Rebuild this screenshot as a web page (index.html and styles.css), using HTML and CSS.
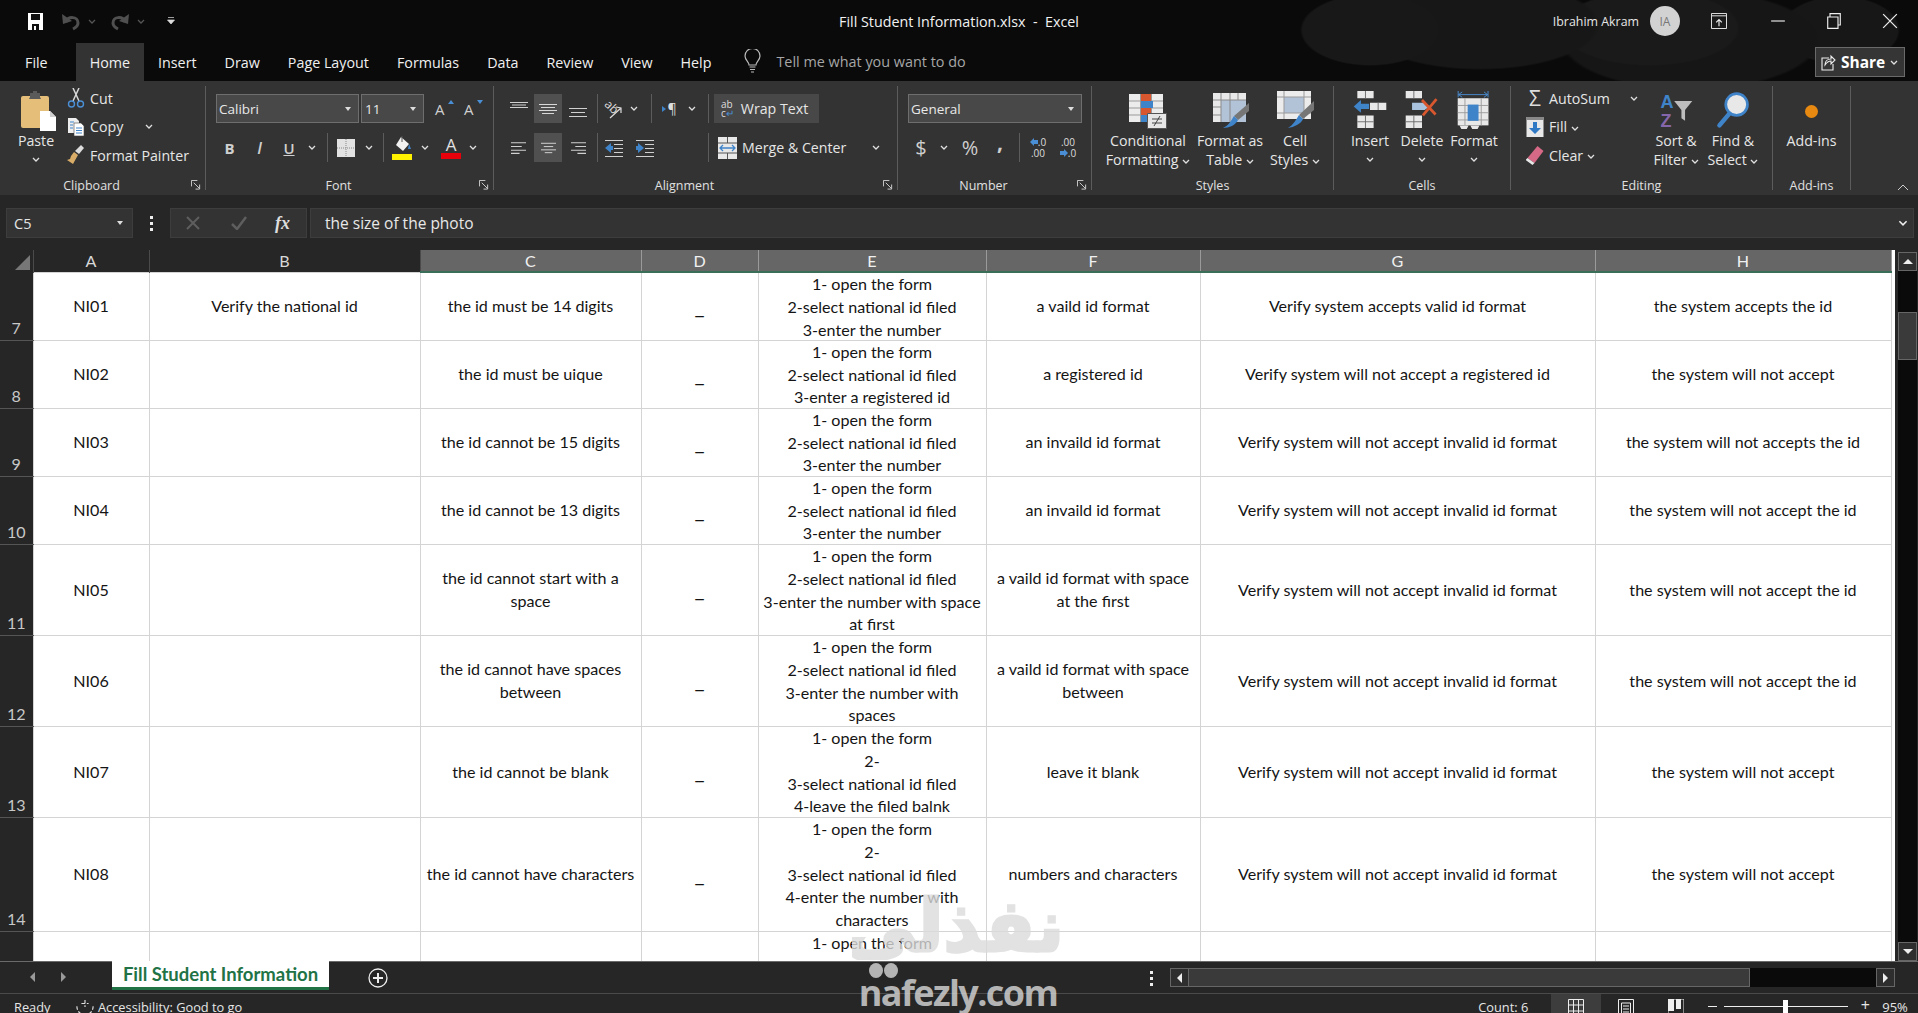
FILE: index.html
```html
<!DOCTYPE html>
<html lang="en">
<head>
    <meta charset="UTF-8">
    <title>Fill Student Information.xlsx - Excel</title>
    <link rel="stylesheet" href="styles.css">
</head>
<body>
    <svg class="defs" aria-hidden="true">
        <symbol id="chev" viewBox="0 0 8 5"><path d="M1 1l3 3 3-3" fill="none" stroke="currentColor" stroke-width="1.300"/></symbol>
        <symbol id="launch" viewBox="0 0 11 11"><path d="M.5 7V.5H7M3 3l6 6M9.500 5v5H5" fill="none" stroke="#d8d8d8"/></symbol>
    </svg>

    <div class="top">
        <div class="titlebar">
            <div class="qat">
                <svg class="save" viewBox="0 0 17 19"><path d="M1 1h15v17H1z" fill="#fff"/><path d="M4 2h9v6H4z" fill="#111"/><path d="M5 12h7v6H5z" fill="#111"/><path d="M7 14h2v4H7z" fill="#fff"/></svg>
                <svg class="undo" viewBox="0 0 20 20"><path d="M5 11c2-6 12-6 12 1 0 3-3 5-5 6" fill="none" stroke="#4f4f4f" stroke-width="3"/><path d="M1 3l1 10 9-3z" fill="#4f4f4f"/></svg>
                <svg class="qat-chev dim"><use href="#chev"/></svg>
                <svg class="undo" viewBox="0 0 20 20"><path d="M15 11c-2-6-12-6-12 1 0 3 3 5 5 6" fill="none" stroke="#4f4f4f" stroke-width="3"/><path d="M19 3l-1 10-9-3z" fill="#4f4f4f"/></svg>
                <svg class="qat-chev dim"><use href="#chev"/></svg>
                <svg class="custom" viewBox="0 0 8 9"><path d="M1 .5h6M.5 3h7L4 7z" fill="#ddd" stroke="#ddd" stroke-width=".7"/></svg>
            </div>
            <div class="doc-title">Fill Student Information.xlsx &nbsp;-&nbsp; Excel</div>
            <div class="account">
                <span class="user-name">Ibrahim Akram</span>
                <span class="avatar">IA</span>
                <span class="win-btn win-first"><svg class="win-icon" viewBox="0 0 17 17"><path d="M.5.500h16v16H.5zM1 3h15" fill="none" stroke="#eee"/><path d="M8.500 14V7M5.500 10l3-3 3 3" fill="none" stroke="#eee" stroke-width="1.200"/></svg></span>
                <span class="win-btn"><svg class="win-icon" viewBox="0 0 14 14"><path d="M1 7h12" stroke="#eee"/></svg></span>
                <span class="win-btn"><svg class="win-icon" viewBox="0 0 14 14"><path d="M1.500 3.500h9v10h-9zM3.500 3.500v-3h9v10h-2" fill="none" stroke="#eee"/></svg></span>
                <span class="win-btn"><svg class="win-icon" viewBox="0 0 14 14"><path d="M1 1l12 12M13 1L1 13" stroke="#eee" stroke-width="1.100"/></svg></span>
            </div>
        </div>
        <div class="tabs">
            <span class="tab tab-file">File</span>
            <span class="tab tab-active">Home</span>
            <span class="tab">Insert</span>
            <span class="tab">Draw</span>
            <span class="tab">Page Layout</span>
            <span class="tab">Formulas</span>
            <span class="tab">Data</span>
            <span class="tab">Review</span>
            <span class="tab">View</span>
            <span class="tab">Help</span>
            <svg class="bulb" viewBox="0 0 17 24"><path d="M5 16c0-3-4-5-4-9a7.500 7.500 0 0 1 15 0c0 4-4 6-4 9z" fill="none" stroke="#bbb" stroke-width="1.200"/><path d="M5.500 18h6M6 20.500h5M7 23h3" stroke="#bbb" stroke-width="1.200"/></svg>
            <span class="tell-me">Tell me what you want to do</span>
            <div class="share">
                <svg class="share-icon" viewBox="0 0 15 17"><path d="M8 4H1v12h11v-6" fill="none" stroke="#eee" stroke-width="1.100"/><path d="M4 11c0-4 3-6 6-6V2l4 4-4 4V7c-2 0-4 1-6 4z" fill="#333" stroke="#eee" stroke-width="1.100"/></svg>
                <span>Share</span>
                <svg class="chev"><use href="#chev"/></svg>
            </div>
        </div>
    </div>

    <div class="ribbon">
        <section class="group g-clipboard">
            <div class="group-body">
                <div class="large paste">
                    <div class="large-icon">
                        <svg class="paste-icon" viewBox="0 0 36 40"><rect x="1" y="5" width="28" height="32" rx="2" fill="#e5bf79"/><path d="M10 6V2h3V0h4v2h3v4l1 2H9z" fill="#5a5a5a"/><path d="M20 20h10l6 6v14H20z" fill="#fff"/><path d="M30 20v6h6z" fill="#cfcfcf"/></svg>
                    </div>
                    <span>Paste</span>
                    <svg class="chev"><use href="#chev"/></svg>
                </div>
                <div class="small-col clip-col">
                    <div class="small-row">
                        <svg class="small-icon" viewBox="0 0 18 20"><path d="M6 0l6 13M12 0L6 13" stroke="#d8d8d8" stroke-width="1.500"/><circle cx="4.500" cy="16" r="3" fill="none" stroke="#4a8fd6" stroke-width="1.400"/><circle cx="13.500" cy="16" r="3" fill="none" stroke="#4a8fd6" stroke-width="1.400"/></svg>
                        <span>Cut</span>
                    </div>
                    <div class="small-row">
                        <svg class="small-icon" viewBox="0 0 18 20"><path d="M1 1h8l3 3v12H1z" fill="#eee"/><path d="M7 6h7l3 3v10H7z" fill="#fff" stroke="#444" stroke-width=".6"/><path d="M3 5h4M3 8h3M3 11h3M9 11h6M9 13.500h6M9 16h6" stroke="#3f83c9" stroke-width="1.100"/></svg>
                        <span>Copy</span>
                        <svg class="chev copy-chev"><use href="#chev"/></svg>
                    </div>
                    <div class="small-row">
                        <svg class="small-icon" viewBox="0 0 18 20"><path d="M14 0l3 3-5 6-4-3z" fill="#ddd"/><path d="M7 7l4 3-5 9-6-4 3-1 1-3z" fill="#d9ad68"/></svg>
                        <span>Format Painter</span>
                    </div>
                </div>
            </div>
            <div class="group-label has-launcher">Clipboard</div>
            <svg class="launcher"><use href="#launch"/></svg>
        </section>

        <section class="group g-font">
            <div class="group-body stack">
                <div class="tool-row">
                    <div class="combo font-name"><span>Calibri</span><i class="caret"></i></div>
                    <div class="combo font-size"><span>11</span><i class="caret"></i></div>
                    <span class="glyph-a grow">A</span>
                    <span class="glyph-a shrink">A</span>
                </div>
                <div class="tool-row">
                    <span class="slot w27 glyph bold">B</span>
                    <span class="slot w33 glyph ital">I</span>
                    <span class="slot w26 glyph under">U</span>
                    <span class="slot w20"><svg class="chev"><use href="#chev"/></svg></span>
                    <span class="slot w10"><i class="vsep"></i></span>
                    <span class="slot w27"><svg class="icon18" viewBox="0 0 18 18"><path d="M0 0h18v18H0z" fill="#e2e2e2"/><path d="M9 0v18M0 9h18" stroke="#888" stroke-dasharray="1 1"/></svg></span>
                    <span class="slot w19"><svg class="chev"><use href="#chev"/></svg></span>
                    <span class="slot w10"><i class="vsep"></i></span>
                    <span class="slot w28"><svg class="icon20" viewBox="0 0 20 24"><path d="M9 1l8 7-6 7-7-6z" fill="#f2f2f2"/><path d="M10 0v6" stroke="#555"/><path d="M17 8l2 5h-3z" fill="#3f83c9"/><path d="M0 18h20v6H0z" fill="#fff200"/></svg></span>
                    <span class="slot w18"><svg class="chev"><use href="#chev"/></svg></span>
                    <span class="slot w34 color-a"><b>A</b><i></i></span>
                    <span class="slot w10"><svg class="chev"><use href="#chev"/></svg></span>
                </div>
            </div>
            <div class="group-label has-launcher">Font</div>
            <svg class="launcher"><use href="#launch"/></svg>
        </section>

        <section class="group g-align">
            <div class="group-body align-body">
                <div class="stack">
                    <div class="tool-row">
                        <span class="slot w31"><svg class="icon18" viewBox="0 0 18 18"><path d="M0 2.500h18M2 5h14M0 7.500h18" stroke="#d0d0d0" fill="none"/></svg></span>
                        <span class="slot w28 on"><svg class="icon18" viewBox="0 0 18 18"><path d="M0 4.500h18M2 7.500h14M0 10.500h18M3 13.500h12" stroke="#d8d8d8" fill="none"/></svg></span>
                        <span class="slot w32"><svg class="icon18" viewBox="0 0 18 18"><path d="M0 8.500h18M2 12.500h14M0 16.500h18" stroke="#d0d0d0" fill="none"/></svg></span>
                        <span class="slot w6"><i class="vsep"></i></span>
                        <span class="slot w28"><svg class="icon20" viewBox="0 0 20 24"><text x="1" y="15" class="orient" transform="rotate(45 9 10)">ab</text><path d="M6 21l11-10M12 10l5 1 0 5" fill="none" stroke="#ddd" stroke-width="1.200"/></svg></span>
                        <span class="slot w12"><svg class="chev"><use href="#chev"/></svg></span>
                        <span class="slot w22"><i class="vsep"></i></span>
                        <span class="slot w15 pilcrow"><i></i>¶</span>
                        <span class="slot w30"><svg class="chev"><use href="#chev"/></svg></span>
                        <span class="slot w2"><i class="vsep"></i></span>
                    </div>
                    <div class="tool-row">
                        <span class="slot w31"><svg class="icon14" viewBox="0 0 14 12"><path d="M0 1.500h14M0 5h10M0 8.500h14M0 11.500h8" stroke="#d0d0d0"/></svg></span>
                        <span class="slot w28 on"><svg class="icon14" viewBox="0 0 16 12"><path d="M0 1.500h16M3 5h10M0 8.500h16M4 11.500h8" stroke="#d8d8d8"/></svg></span>
                        <span class="slot w32"><svg class="icon14" viewBox="0 0 14 12"><path d="M0 1.500h14M4 5h10M0 8.500h14M6 11.500h8" stroke="#d0d0d0"/></svg></span>
                        <span class="slot w6"><i class="vsep"></i></span>
                        <span class="slot w28"><svg class="icon18" viewBox="0 0 18 18"><path d="M0 1.500h18M9 5.500h9M9 9.500h9M9 13.500h9M0 17.500h18" stroke="#d0d0d0"/><path d="M0 9l6-5v3h2v4H6v3z" fill="#3f83c9"/></svg></span>
                        <span class="slot w34"><svg class="icon18" viewBox="0 0 18 18"><path d="M0 1.500h18M9 5.500h9M9 9.500h9M9 13.500h9M0 17.500h18" stroke="#d0d0d0"/><path d="M8 9L2 4v3H0v4h2v3z" fill="#3f83c9"/></svg></span>
                        <span class="slot w45"></span>
                        <span class="slot w2"><i class="vsep"></i></span>
                    </div>
                </div>
                <div class="stack wrap-col">
                    <div class="wrap-btn">
                        <span class="wrap-glyph">ab<br>c<em>↵</em></span>
                        <span>Wrap Text</span>
                    </div>
                    <div class="merge-btn">
                        <svg class="merge-icon" viewBox="0 0 19 22"><path d="M0 0h19v22H0z" fill="#e8e8e8"/><path d="M0 6h19M0 16h19M9.500 0v6M9.500 16v6" stroke="#555"/><path d="M2 11h15M5 8l-3 3 3 3M14 8l3 3-3 3" fill="none" stroke="#3f83c9" stroke-width="1.300"/></svg>
                        <span class="merge-text">Merge &amp; Center</span>
                        <svg class="chev"><use href="#chev"/></svg>
                    </div>
                </div>
            </div>
            <div class="group-label has-launcher">Alignment</div>
            <svg class="launcher"><use href="#launch"/></svg>
        </section>

        <section class="group g-number">
            <div class="group-body stack">
                <div class="tool-row">
                    <div class="combo number-format"><span>General</span><i class="caret"></i></div>
                </div>
                <div class="tool-row">
                    <span class="slot w26 glyph big">$</span>
                    <span class="slot w20"><svg class="chev"><use href="#chev"/></svg></span>
                    <span class="slot w32 glyph big">%</span>
                    <span class="slot w28 glyph comma">,</span>
                    <span class="slot w10"><i class="vsep"></i></span>
                    <span class="slot w28 decimals"><svg class="dec-arrow" viewBox="0 0 8 8"><path d="M0 4l4-4v2h4v4H4v2z" fill="#4a8fd6"/></svg>.0<br>.00</span>
                    <span class="slot w32 decimals">.00<br><svg class="dec-arrow" viewBox="0 0 8 8"><path d="M8 4L4 0v2H0v4h4v2z" fill="#4a8fd6"/></svg>.0</span>
                </div>
            </div>
            <div class="group-label has-launcher">Number</div>
            <svg class="launcher"><use href="#launch"/></svg>
        </section>

        <section class="group g-styles">
            <div class="group-body">
                <div class="large w90">
                    <div class="large-icon">
                        <svg class="style-icon" viewBox="0 0 38 38"><path d="M0 3h34v28H0z" fill="#ececec"/><path d="M11.500 3v28M22.500 3v28M0 10h34M0 17h34M0 24h34" stroke="#999"/><path d="M12 3h10v7H12zM12 17h10v7H12z" fill="#d9572e"/><path d="M12 10h12v7H12zM12 24h10v7H12z" fill="#3f83c9"/><path d="M18.500 22.500h19v15h-19z" fill="#e6e6e6" stroke="#555"/><path d="M23 28h10M23 32h10M31 25l-6 10" stroke="#444"/></svg>
                    </div>
                    <span>Conditional</span>
                    <span>Formatting <svg class="chev"><use href="#chev"/></svg></span>
                </div>
                <div class="large w74">
                    <div class="large-icon">
                        <svg class="style-icon" viewBox="0 0 38 38"><path d="M2 2h33v29H2z" fill="#e8e8e8"/><path d="M10 9h25v22H10z" fill="#b2c3d8"/><path d="M10 2v29M19 2v29M27 2v7M2 9h33M2 16h8M2 24h8" stroke="#8a8a8a"/><path d="M38 12v8l-11 9-4-4z" fill="#767676"/><path d="M23 25l4 4c-2 5-9 8-15 8 5-2 8-7 11-12z" fill="#3f83c9"/></svg>
                    </div>
                    <span>Format as</span>
                    <span>Table <svg class="chev"><use href="#chev"/></svg></span>
                </div>
                <div class="large w56">
                    <div class="large-icon">
                        <svg class="style-icon" viewBox="0 0 38 38"><path d="M1 0h34v28H1z" fill="#ececec"/><path d="M8 6h20v16H8z" fill="#b2c3d8"/><path d="M8 0v28M28 0v28M1 6h34M1 22h34" stroke="#9a9a9a"/><path d="M38 10v9l-11 9-4-4z" fill="#767676"/><path d="M23 24l4 4c-2 5-9 8-15 9 5-3 8-8 11-13z" fill="#3f83c9"/></svg>
                    </div>
                    <span>Cell</span>
                    <span>Styles <svg class="chev"><use href="#chev"/></svg></span>
                </div>
            </div>
            <div class="group-label">Styles</div>
        </section>

        <section class="group g-cells">
            <div class="group-body">
                <div class="large w52">
                    <div class="large-icon">
                        <svg class="style-icon" viewBox="0 0 36 42"><path d="M4 0h18v8H4zM18 13h18v8H18zM4 27h18v14H4z" fill="#e8e8e8"/><path d="M13 0v8M27 13v8M13 27v14M4 34h18" stroke="#666"/><path d="M0 17l8-7v4h9v6H8v4z" fill="#3f83c9"/></svg>
                    </div>
                    <span>Insert</span>
                    <svg class="chev"><use href="#chev"/></svg>
                </div>
                <div class="large w52">
                    <div class="large-icon">
                        <svg class="style-icon" viewBox="0 0 36 42"><path d="M0 0h18v8H0zM0 27h18v14H0z" fill="#e8e8e8"/><path d="M9 0v8M9 27v14M0 34h18" stroke="#666"/><path d="M7 13h14l5 4-5 4H7z" fill="#a9c3de"/><path d="M18 10l15 16M34 9L19 27" stroke="#d9572e" stroke-width="3"/></svg>
                    </div>
                    <span>Delete</span>
                    <svg class="chev"><use href="#chev"/></svg>
                </div>
                <div class="large w52">
                    <div class="large-icon">
                        <svg class="style-icon" viewBox="0 0 36 42"><path d="M0 8h34v30H0z" fill="#e8e8e8"/><path d="M8 8v30M26 8v30M0 16h34M0 24h34M0 32h34" stroke="#999"/><path d="M11 15h12v18H11z" fill="#3f83c9"/><path d="M1 4h32M5 1L1 4l4 3M29 1l4 3-4 3M.500 0v7M33.500 0v7" fill="none" stroke="#4a8fd6"/><path d="M2 38h10l-2 4H4zM14 38h10l-2 4h-6z" fill="#e8e8e8"/></svg>
                    </div>
                    <span>Format</span>
                    <svg class="chev"><use href="#chev"/></svg>
                </div>
            </div>
            <div class="group-label">Cells</div>
        </section>

        <section class="group g-editing">
            <div class="group-body">
                <div class="small-col edit-col">
                    <div class="small-row">
                        <span class="sigma">Σ</span>
                        <span>AutoSum</span>
                        <svg class="chev sum-chev"><use href="#chev"/></svg>
                    </div>
                    <div class="small-row">
                        <svg class="small-icon" viewBox="0 0 17 20"><path d="M0 0h17v20H0z" fill="#e8e8e8"/><path d="M0 0h17v3H0z" fill="#888"/><path d="M8.500 17l-6-6h4V5h4v6h4z" fill="#2f78c4"/></svg>
                        <span>Fill <svg class="chev"><use href="#chev"/></svg></span>
                    </div>
                    <div class="small-row">
                        <svg class="small-icon" viewBox="0 0 17 20"><path d="M11 1l6 5-9 12-7-5z" fill="#d66a86"/><path d="M1 13l7 5-2 2-7-5z" fill="#e8e8e8"/></svg>
                        <span>Clear <svg class="chev"><use href="#chev"/></svg></span>
                    </div>
                </div>
                <div class="large w52">
                    <div class="large-icon">
                        <svg class="style-icon" viewBox="0 0 36 42"><text x="1" y="19" class="az a">A</text><text x="1" y="40" class="az z">Z</text><path d="M16 11h20l-8 10v12l-4-3V21z" fill="#bdbdbd"/></svg>
                    </div>
                    <span>Sort &amp;</span>
                    <span>Filter <svg class="chev"><use href="#chev"/></svg></span>
                </div>
                <div class="large w62">
                    <div class="large-icon">
                        <svg class="style-icon" viewBox="0 0 36 42"><circle cx="22" cy="15" r="12" fill="#e8e8e8" stroke="#3f83c9" stroke-width="3"/><path d="M14 25L3 38" stroke="#3f83c9" stroke-width="5" stroke-linecap="round"/></svg>
                    </div>
                    <span>Find &amp;</span>
                    <span>Select <svg class="chev"><use href="#chev"/></svg></span>
                </div>
            </div>
            <div class="group-label">Editing</div>
        </section>

        <section class="group g-addins">
            <div class="group-body">
                <div class="large w78">
                    <div class="large-icon"><i class="addin-dot"></i></div>
                    <span>Add-ins</span>
                </div>
            </div>
            <div class="group-label">Add-ins</div>
        </section>

        <svg class="collapse" viewBox="0 0 12 7"><path d="M1 6l5-5 5 5" fill="none" stroke="#ccc"/></svg>
    </div>

    <div class="formula-bar">
        <div class="name-box"><span>C5</span><i class="caret"></i></div>
        <div class="fb-dots"><i></i><i></i><i></i></div>
        <div class="fb-buttons">
            <svg class="fb-x" viewBox="0 0 14 14"><path d="M1 1l12 12M13 1L1 13" stroke="#5e5e5e" stroke-width="2"/></svg>
            <svg class="fb-check" viewBox="0 0 16 14"><path d="M1 8l5 5L15 1" fill="none" stroke="#5e5e5e" stroke-width="2.500"/></svg>
            <span class="fx">fx</span>
        </div>
        <div class="fb-input">
            <span>the size of the photo</span>
            <svg class="fb-chev"><use href="#chev"/></svg>
        </div>
    </div>

    <div class="sheet-area">
        <div class="sheet">
            <table class="grid">
                <colgroup>
                    <col class="c-row"><col class="c-a"><col class="c-b"><col class="c-c"><col class="c-d"><col class="c-e"><col class="c-f"><col class="c-g"><col class="c-h">
                </colgroup>
                <thead>
                    <tr>
                        <th class="corner"><i></i></th>
                        <th>A</th><th>B</th>
                        <th class="sel">C</th><th class="sel">D</th><th class="sel">E</th><th class="sel">F</th><th class="sel">G</th><th class="sel">H</th>
                    </tr>
                </thead>
                <tbody>
                    <tr class="h3">
                        <th>7</th><td>NI01</td><td>Verify the national id</td><td>the id must be 14 digits</td><td class="dash">_</td>
                        <td><div class="lines">1- open the form<br>2-select national id filed<br>3-enter the number</div></td>
                        <td>a vaild id format</td><td>Verify system accepts valid id format</td><td>the system accepts the id</td>
                    </tr>
                    <tr class="h3">
                        <th>8</th><td>NI02</td><td></td><td>the id must be uique</td><td class="dash">_</td>
                        <td><div class="lines">1- open the form<br>2-select national id filed<br>3-enter a registered id</div></td>
                        <td>a registered id</td><td>Verify system will not accept a registered id</td><td>the system will not accept</td>
                    </tr>
                    <tr class="h3">
                        <th>9</th><td>NI03</td><td></td><td>the id cannot be 15 digits</td><td class="dash">_</td>
                        <td><div class="lines">1- open the form<br>2-select national id filed<br>3-enter the number</div></td>
                        <td>an invaild id format</td><td>Verify system will not accept invalid id format</td><td>the system will not accepts the id</td>
                    </tr>
                    <tr class="h3">
                        <th>10</th><td>NI04</td><td></td><td>the id cannot be 13 digits</td><td class="dash">_</td>
                        <td><div class="lines">1- open the form<br>2-select national id filed<br>3-enter the number</div></td>
                        <td>an invaild id format</td><td>Verify system will not accept invalid id format</td><td>the system will not accept the id</td>
                    </tr>
                    <tr class="h4">
                        <th>11</th><td>NI05</td><td></td><td>the id cannot start with a<br>space</td><td class="dash">_</td>
                        <td><div class="lines">1- open the form<br>2-select national id filed<br>3-enter the number with space<br>at first</div></td>
                        <td>a vaild id format with space<br>at the first</td><td>Verify system will not accept invalid id format</td><td>the system will not accept the id</td>
                    </tr>
                    <tr class="h4">
                        <th>12</th><td>NI06</td><td></td><td>the id cannot have spaces<br>between</td><td class="dash">_</td>
                        <td><div class="lines">1- open the form<br>2-select national id filed<br>3-enter the number with<br>spaces</div></td>
                        <td>a vaild id format with space<br>between</td><td>Verify system will not accept invalid id format</td><td>the system will not accept the id</td>
                    </tr>
                    <tr class="h4">
                        <th>13</th><td>NI07</td><td></td><td>the id cannot be blank</td><td class="dash">_</td>
                        <td><div class="lines">1- open the form<br>2-<br>3-select national id filed<br>4-leave the filed balnk</div></td>
                        <td>leave it blank</td><td>Verify system will not accept invalid id format</td><td>the system will not accept</td>
                    </tr>
                    <tr class="h5">
                        <th>14</th><td>NI08</td><td></td><td>the id cannot have characters</td><td class="dash">_</td>
                        <td><div class="lines">1- open the form<br>2-<br>3-select national id filed<br>4-enter the number with<br>characters</div></td>
                        <td>numbers and characters</td><td>Verify system will not accept invalid id format</td><td>the system will not accept</td>
                    </tr>
                    <tr class="cut">
                        <th></th><td></td><td></td><td></td><td></td>
                        <td>1- open the form</td>
                        <td></td><td></td><td></td>
                    </tr>
                </tbody>
            </table>
        </div>
        <div class="vscroll">
            <div class="sb-btn"><i class="tri-up"></i></div>
            <div class="sb-track"><div class="sb-thumb"></div></div>
            <div class="sb-btn"><i class="tri-down"></i></div>
        </div>
    </div>

    <div class="sheet-tabs">
        <div class="tab-nav"><i class="tri-left"></i><i class="tri-right"></i></div>
        <div class="sheet-tab">Fill Student Information</div>
        <svg class="add-sheet" viewBox="0 0 20 20"><circle cx="10" cy="10" r="9" fill="none" stroke="#eee" stroke-width="1.300"/><path d="M10 5v10M5 10h10" stroke="#eee" stroke-width="2"/></svg>
        <div class="fb-dots tab-dots"><i></i><i></i><i></i></div>
        <div class="hscroll">
            <div class="sb-btn"><i class="tri-left"></i></div>
            <div class="hs-thumb"></div>
            <div class="hs-track"></div>
            <div class="sb-btn"><i class="tri-right"></i></div>
        </div>
    </div>

    <div class="status">
        <span class="ready">Ready</span>
        <svg class="a11y" viewBox="0 0 20 20"><path d="M10 1v8M6 5h8M1 8c0 5 3 9 9 10M19 8c0 5-3 9-9 10" fill="none" stroke="#ddd" stroke-width="1.300" stroke-dasharray="4 2"/></svg>
        <span>Accessibility: Good to go</span>
        <span class="count">Count: 6</span>
        <span class="view on"><svg class="view-icon" viewBox="0 0 16 18"><path d="M.5.500h15v17H.5zM5.500 0v18M10.500 0v18M0 6h16M0 12h16" fill="none" stroke="#eee"/></svg></span>
        <span class="view"><svg class="view-icon" viewBox="0 0 16 18"><path d="M.5.500h15v17H.5z" fill="none" stroke="#eee"/><path d="M3.500 4h9v14h-9zM5 7h6M5 10h6M5 13h6" fill="none" stroke="#eee"/></svg></span>
        <span class="view"><svg class="view-icon" viewBox="0 0 16 18"><path d="M0 0h16v18H0z" fill="none" stroke="#eee"/><path d="M0 0h6v12H0zM8 0h5v10H8z" fill="#eee"/></svg></span>
        <span class="zoom-minus"></span>
        <span class="zoom-track"><i></i></span>
        <span class="zoom-plus">+</span>
        <span class="zoom-pct">95%</span>
    </div>

    <div class="watermark">
        <div class="wm-ar" dir="rtl" lang="ar">نفذلي</div>
        <div class="wm-dots"><i></i><i></i></div>
        <div class="wm-en">nafezly.com</div>
    </div>
</body>
</html>
```

FILE: styles.css
```css
* {
    margin: 0;
    padding: 0;
    box-sizing: border-box;
}

html, body {
    height: 1013px;
    overflow: hidden;
}

body {
    display: flex;
    flex-direction: column;
    position: relative;
    background: #262626;
    color: #e6e6e6;
    font-family: "Open Sans", "Noto Sans", sans-serif;
    font-size: 14.200px;
}

i, em {
    font-style: normal;
}

.defs {
    position: absolute;
    width: 0;
    height: 0;
}

.chev {
    width: 8px;
    height: 5px;
    color: #e0e0e0;
    vertical-align: middle;
}

/* title bar and tabs */
.top {
    height: 81px;
    background:
        radial-gradient(ellipse 70px 36px at 1370px 30px, #181818 96%, transparent),
        radial-gradient(ellipse 120px 45px at 1480px 25px, #171717 96%, transparent),
        radial-gradient(ellipse 90px 38px at 1650px 28px, #1a1a1a 96%, transparent),
        radial-gradient(ellipse 130px 50px at 1690px 40px, #161616 96%, transparent),
        radial-gradient(ellipse 60px 34px at 1840px 30px, #171717 96%, transparent),
        #0a0a0a;
}

.titlebar {
    height: 40px;
    padding-top: 2px;
    display: grid;
    grid-template-columns: 1fr auto 1fr;
    align-items: center;
}

.qat {
    display: flex;
    align-items: center;
    padding-left: 27px;
}

.save {
    width: 17px;
    height: 19px;
    margin-right: 17px;
}

.undo {
    width: 20px;
    height: 20px;
}

.qat-chev {
    width: 8px;
    height: 5px;
    margin: 0 14px 0 7px;
}

.dim {
    color: #555;
}

.custom {
    width: 8px;
    height: 9px;
    margin-left: 8px;
}

.doc-title {
    font-size: 14.300px;
    color: #f2f2f2;
}

.account {
    display: flex;
    align-items: center;
    justify-content: flex-end;
}

.user-name {
    font-size: 12.400px;
    color: #e6e6e6;
    margin-right: 11px;
}

.avatar {
    width: 30px;
    height: 30px;
    border-radius: 50%;
    background: #d2d2d2;
    color: #777;
    font-size: 12px;
    display: flex;
    align-items: center;
    justify-content: center;
    margin-right: 14px;
}

.win-btn {
    width: 56px;
    height: 38px;
    display: flex;
    align-items: center;
    justify-content: center;
}

.win-first {
    padding-right: 6px;
}

.win-icon {
    width: 16px;
    height: 16px;
}

.tabs {
    height: 41px;
    display: flex;
    align-items: stretch;
    padding-left: 11px;
    font-size: 14.300px;
}

.tab {
    padding: 1px 14px 0;
    display: flex;
    align-items: center;
    height: 38px;
    margin-top: 3px;
    color: #f0f0f0;
}

.tab-file {
    margin-right: 14px;
}

.tab-active {
    background: #333;
}

.bulb {
    width: 17px;
    height: 24px;
    margin: 9px 15px 0 19px;
}

.tell-me {
    color: #a6a6a6;
    margin-top: 1px;
    display: flex;
    align-items: center;
    font-size: 14.400px;
}

.share {
    margin: 7px 13px 4px auto;
    width: 90px;
    background: #353535;
    border: 1px solid #6a6a6a;
    display: flex;
    align-items: center;
    gap: 5px;
    padding-left: 5px;
    font-size: 15.500px;
    font-weight: 700;
    color: #fff;
}

.share-icon {
    width: 15px;
    height: 17px;
}

/* ribbon */
.ribbon {
    height: 114px;
    background: #333;
    display: flex;
    padding: 5px 0;
    position: relative;
}

.group {
    position: relative;
    display: flex;
    flex-direction: column;
    border-right: 1px solid #5c5c5c;
}

.g-clipboard { width: 206px; }
.g-font { width: 288px; padding-left: 10px; }
.g-align { width: 404px; padding-left: 9px; }
.g-number { width: 194px; padding-left: 10px; }
.g-styles { width: 242px; padding-left: 11px; }
.g-cells { width: 177px; padding-left: 10px; }
.g-editing { width: 262px; padding-left: 15px; }
.g-addins { width: 78px; }

.group-body {
    flex: 1;
    display: flex;
}

.group-label {
    position: absolute;
    left: 0;
    right: 0;
    bottom: -4px;
    text-align: center;
    font-size: 12.500px;
    line-height: 16px;
    color: #e0e0e0;
}

.group-label.has-launcher {
    right: 22px;
}

.launcher {
    position: absolute;
    right: 4px;
    bottom: 0;
    width: 10px;
    height: 10px;
}

.collapse {
    position: absolute;
    right: 9px;
    bottom: 4px;
    width: 12px;
    height: 7px;
}

.large {
    display: flex;
    flex-direction: column;
    align-items: center;
    line-height: 19px;
    white-space: nowrap;
}

.large-icon {
    height: 45px;
    padding-top: 5px;
    display: flex;
    justify-content: center;
}

.paste {
    width: 72px;
}

.paste-icon {
    width: 36px;
    height: 40px;
    margin-left: 3px;
}

.large > .chev {
    margin-top: 7px;
}

.style-icon {
    width: 38px;
    height: 38px;
}

.w52 { width: 52px; }
.w56 { width: 56px; }
.w62 { width: 62px; }
.w74 { width: 74px; }
.w78 { width: 78px; }
.w90 { width: 90px; }

.small-col {
    display: flex;
    flex-direction: column;
    margin-top: -2px;
}

.clip-col {
    margin-left: -5px;
}

.edit-col {
    width: 124px;
}

.small-row {
    height: 28.500px;
    display: flex;
    align-items: center;
    gap: 5px;
    white-space: nowrap;
}

.small-icon {
    width: 18px;
    height: 20px;
}

.copy-chev {
    margin-left: 17px;
}

.sum-chev {
    margin-left: 15px;
}

.sigma {
    width: 18px;
    font-size: 21px;
    line-height: 20px;
    text-align: center;
    color: #ddd;
}

.stack {
    flex-direction: column;
    display: flex;
    gap: 10px;
    padding-top: 8px;
}

.tool-row {
    height: 29px;
    display: flex;
    align-items: center;
}

.combo {
    height: 29px;
    background: #484848;
    border: 1px solid #6e6e6e;
    display: flex;
    align-items: center;
    justify-content: space-between;
    padding: 0 7px 0 2px;
    color: #e8e8e8;
    font-size: 13.500px;
}

.font-name { width: 143px; margin-right: 2px; }
.font-size { width: 63px; margin-right: 11px; padding-left: 3px; }
.number-format { width: 174px; }

.caret {
    width: 0;
    height: 0;
    border-left: 3.500px solid transparent;
    border-right: 3.500px solid transparent;
    border-top: 4px solid #ddd;
}

.glyph-a {
    font-size: 15px;
    width: 17px;
    position: relative;
    color: #cfcfcf;
    margin-right: 12px;
}

.glyph-a::after {
    content: '';
    position: absolute;
    right: -2px;
    top: 1px;
    border-left: 3px solid transparent;
    border-right: 3px solid transparent;
}

.grow::after { border-bottom: 4px solid #4a8fd6; }
.shrink::after { border-top: 4px solid #4a8fd6; }

.slot {
    height: 29px;
    display: flex;
    align-items: center;
    justify-content: center;
    flex-shrink: 0;
}

.w2 { width: 2px; }
.w6 { width: 6px; }
.w10 { width: 10px; }
.w12 { width: 12px; }
.w15 { width: 15px; }
.w18 { width: 18px; }
.w19 { width: 19px; }
.w20 { width: 20px; }
.w22 { width: 22px; }
.w26 { width: 26px; }
.w27 { width: 27px; }
.w28 { width: 28px; }
.w30 { width: 30px; }
.w31 { width: 31px; }
.w32 { width: 32px; }
.w33 { width: 33px; }
.w34 { width: 34px; }
.w45 { width: 45px; }

.slot.on {
    background: #505050;
}

.vsep {
    display: block;
    width: 1px;
    height: 29px;
    background: #5c5c5c;
}

.glyph {
    color: #cfcfcf;
    font-size: 15px;
}

.bold { font-weight: 700; }
.ital { font-style: italic; font-size: 16px; font-weight: 600; }
.under { text-decoration: underline; font-weight: 600; }
.big { font-size: 20px; }
.comma { font-size: 21px; font-weight: 700; padding-bottom: 12px; }

.icon18 {
    width: 18px;
    height: 18px;
}

.icon14 {
    width: 15px;
    height: 13px;
}

.icon20 {
    width: 20px;
    height: 24px;
}

.orient {
    font-size: 12px;
    fill: #ddd;
}

.color-a {
    flex-direction: column;
    line-height: 16px;
    font-size: 17px;
    color: #e2e2e2;
}

.color-a b {
    font-weight: 400;
}

.color-a i {
    display: block;
    width: 20px;
    height: 6px;
    background: #e8000b;
}

.pilcrow {
    color: #ddd;
    font-size: 14px;
}

.pilcrow i {
    border-left: 4px solid #3f83c9;
    border-top: 3.500px solid transparent;
    border-bottom: 3.500px solid transparent;
    margin-right: 1px;
}

.decimals {
    font-size: 10px;
    line-height: 11px;
    display: block;
    text-align: center;
    padding-top: 4px;
    color: #ddd;
}

.dec-arrow {
    width: 8px;
    height: 8px;
}

.align-body {
    gap: 5px;
}

.wrap-btn {
    width: 105px;
    height: 29px;
    background: #484848;
    display: flex;
    align-items: center;
    gap: 7px;
    padding-left: 7px;
}

.wrap-glyph {
    font-size: 10px;
    line-height: 9px;
    color: #ddd;
}

.wrap-glyph em {
    color: #4a8fd6;
}

.merge-btn {
    width: 166px;
    height: 29px;
    display: flex;
    align-items: center;
    gap: 5px;
    padding-left: 4px;
}

.merge-icon {
    width: 19px;
    height: 22px;
}

.merge-text {
    flex: 1;
}

.az {
    font-size: 20px;
    font-weight: 700;
    font-family: "Liberation Sans", sans-serif;
}

.az.a { fill: #3f83c9; }
.az.z { fill: #8566ab; }

.addin-dot {
    display: block;
    width: 13px;
    height: 13px;
    margin-top: 14px;
    border-radius: 50%;
    background: #e88a12;
}

/* formula bar */
.formula-bar {
    height: 55px;
    background: #262626;
    display: flex;
    align-items: flex-start;
    padding: 13px 4px 0 6px;
}

.name-box {
    width: 127px;
    height: 30px;
    background: #333;
    border: 1px solid #3d3d3d;
    display: flex;
    align-items: center;
    justify-content: space-between;
    padding: 0 9px 0 7px;
    font-size: 14.500px;
}

.fb-dots {
    width: 37px;
    height: 30px;
    display: flex;
    flex-direction: column;
    align-items: center;
    justify-content: center;
    gap: 3px;
}

.fb-dots i {
    width: 3px;
    height: 3px;
    background: #eee;
}

.fb-buttons {
    width: 137px;
    height: 30px;
    background: #333;
    border: 1px solid #3d3d3d;
    display: flex;
    align-items: center;
    padding-left: 15px;
}

.fb-x {
    width: 14px;
    height: 14px;
    margin-right: 31px;
}

.fb-check {
    width: 16px;
    height: 14px;
    margin-right: 28px;
}

.fx {
    font-family: "Liberation Serif", serif;
    font-style: italic;
    font-weight: 700;
    font-size: 18px;
    color: #ddd;
}

.fb-input {
    flex: 1;
    margin-left: 3px;
    height: 30px;
    background: #333;
    border: 1px solid #3d3d3d;
    display: flex;
    align-items: center;
    justify-content: space-between;
    padding: 0 5px 0 14px;
    font-size: 15.500px;
    color: #e8e8e8;
}

.fb-chev {
    width: 10px;
    height: 6px;
    color: #eee;
}

/* worksheet */
.sheet-area {
    height: 711px;
    display: flex;
}

.sheet {
    width: 1895px;
    height: 711px;
    overflow: hidden;
    background: #fff;
}

.grid {
    width: 1891px;
    table-layout: fixed;
    border-collapse: collapse;
    font-family: Lato, "Open Sans", sans-serif;
    font-size: 16.100px;
    line-height: 22.850px;
    color: #141414;
}

.c-row { width: 33px; }
.c-a { width: 116px; }
.c-b { width: 271px; }
.c-c { width: 221px; }
.c-d { width: 117px; }
.c-e { width: 228px; }
.c-f { width: 214px; }
.c-g { width: 395px; }
.c-h { width: 296px; }

thead tr {
    height: 22px;
}

thead th {
    background: #262626;
    color: #d8d8d8;
    font-weight: 400;
    line-height: 20px;
    border-right: 1px solid #4a4a4a;
}

thead th.sel {
    background: #666;
    color: #f0f0f0;
    border-right: 1px solid #9a9a9a;
    border-bottom: 2px solid #3a6e59;
}

.corner {
    position: relative;
}

.corner i {
    position: absolute;
    right: 3px;
    bottom: 2px;
    border-left: 15px solid transparent;
    border-bottom: 15px solid #777;
}

tbody th {
    background: #262626;
    color: #c8c8c8;
    font-weight: 400;
    vertical-align: bottom;
    line-height: 18px;
    padding-bottom: 3px;
    border-bottom: 1px solid #555;
}

td {
    text-align: center;
    vertical-align: middle;
    border: 1px solid #d4d4d4;
    padding-top: 1px;
    white-space: nowrap;
    overflow: hidden;
}

.lines {
    margin: -2.500px 0 -3.500px;
}

.h3 { height: 68px; }
.h4 { height: 91px; }
.h5 { height: 114px; }

.cut {
    height: 30px;
}

.cut td {
    vertical-align: top;
    border-bottom: 0;
    padding-top: 0;
}

.cut th {
    border-bottom: 0;
    padding-bottom: 0;
}

td.dash {
    font-size: 22px;
    padding-top: 0;
}

.vscroll {
    width: 23px;
    padding: 2px 1px 0 3px;
    display: flex;
    flex-direction: column;
    background: #262626;
}

.sb-btn {
    flex-shrink: 0;
    width: 19px;
    height: 19px;
    background: #2e2e2e;
    border: 1px solid #666;
    display: flex;
    align-items: center;
    justify-content: center;
}

.sb-track {
    flex: 1;
    background: #0a0a0a;
    padding-top: 41px;
}

.sb-thumb {
    height: 48px;
    background: #3a3a3a;
    border: 1px solid #666;
}

.tri-up, .tri-down, .tri-left, .tri-right {
    width: 0;
    height: 0;
}

.tri-up {
    border-left: 5px solid transparent;
    border-right: 5px solid transparent;
    border-bottom: 5px solid #eee;
}

.tri-down {
    border-left: 5px solid transparent;
    border-right: 5px solid transparent;
    border-top: 5px solid #eee;
}

.tri-left {
    border-top: 5px solid transparent;
    border-bottom: 5px solid transparent;
    border-right: 5px solid #eee;
}

.tri-right {
    border-top: 5px solid transparent;
    border-bottom: 5px solid transparent;
    border-left: 5px solid #eee;
}

/* sheet tabs */
.sheet-tabs {
    height: 32px;
    background: #262626;
    border-top: 1px solid #6a6a6a;
    display: flex;
    align-items: flex-start;
}

.tab-nav {
    width: 112px;
    height: 30px;
    display: flex;
    align-items: center;
    gap: 26px;
    padding-left: 30px;
}

.tab-nav i {
    border-left-color: #999;
    border-right-color: #999;
}

.sheet-tab {
    width: 217px;
    height: 29px;
    background: #fff;
    border-bottom: 3px solid #217346;
    color: #217346;
    font-family: Lato, "Open Sans", sans-serif;
    font-weight: 700;
    font-size: 18.500px;
    line-height: 26px;
    text-align: center;
    margin-top: -1px;
}

.add-sheet {
    width: 20px;
    height: 20px;
    margin: 6px 0 0 39px;
}

.tab-dots {
    margin-left: 745px;
    margin-top: 1px;
}

.hscroll {
    width: 725px;
    height: 19px;
    margin: 6px 0 0 0;
    display: flex;
}

.hs-thumb {
    width: 561px;
    background: #3a3a3a;
    border: 1px solid #666;
    border-left: 0;
}

.hs-track {
    flex: 1;
    background: #0a0a0a;
}

/* status bar */
.status {
    height: 20px;
    border-top: 1px solid #4a4a4a;
    background: #262626;
    display: flex;
    align-items: flex-start;
    padding-left: 14px;
    font-size: 12.800px;
    line-height: 26px;
    overflow: hidden;
    color: #e6e6e6;
}

.ready {
    width: 62px;
}

.a11y {
    width: 18px;
    height: 20px;
    margin: 4px 4px 0 0;
}

.count {
    margin-left: 1236px;
    width: 73px;
}

.view {
    width: 50px;
    height: 26px;
    display: flex;
    justify-content: center;
    padding-top: 5px;
}

.view.on {
    background: #3d3d3d;
}

.view-icon {
    width: 16px;
    height: 18px;
}

.zoom-minus {
    width: 9px;
    height: 1px;
    background: #eee;
    margin: 12px 7px 0 7px;
}

.zoom-track {
    width: 124px;
    height: 1px;
    background: #eee;
    margin-top: 12px;
    position: relative;
}

.zoom-track i {
    position: absolute;
    left: 59px;
    top: -6px;
    width: 5px;
    height: 20px;
    background: #fff;
}

.zoom-plus {
    width: 34px;
    text-align: center;
    font-size: 16px;
    line-height: 22px;
}

.zoom-pct {
    font-size: 13px;
}

/* overlay logo */
.watermark {
    position: absolute;
    left: 852px;
    top: 893px;
    width: 212px;
    height: 120px;
    pointer-events: none;
    text-align: center;
    overflow: hidden;
    color: #dbdbdb;
    opacity: 0.79;
}

.wm-ar {
    font-family: "DejaVu Sans", sans-serif;
    font-weight: 700;
    font-size: 72px;
    line-height: 67px;
    height: 67px;
    overflow: hidden;
    white-space: nowrap;
    -webkit-text-stroke: 3px #dbdbdb;
}

.wm-dots {
    display: flex;
    gap: 1px;
    justify-content: flex-start;
    padding-left: 17px;
    margin-top: 3px;
}

.wm-dots i {
    width: 14px;
    height: 15px;
    border-radius: 50%;
    background: #dbdbdb;
}

.wm-en {
    font-family: "Open Sans", sans-serif;
    font-weight: 700;
    font-size: 36px;
    letter-spacing: -1.600px;
    line-height: 30px;
}
```
